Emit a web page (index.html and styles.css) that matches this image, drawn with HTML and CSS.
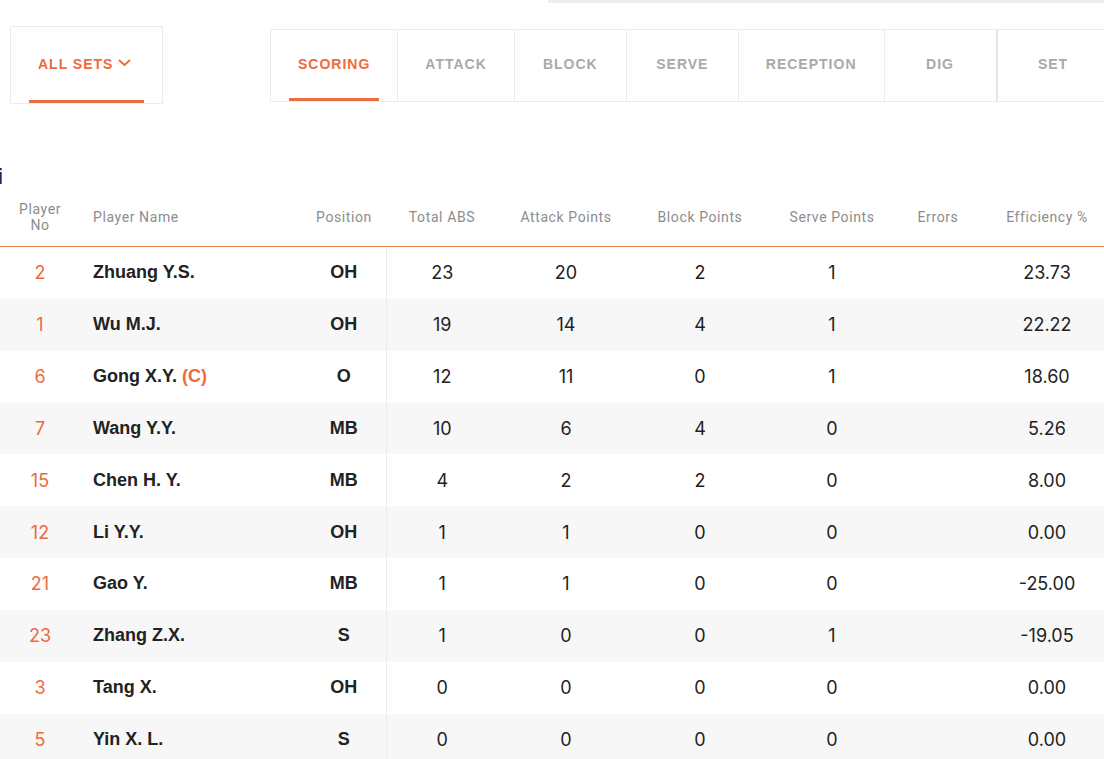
FILE: index.html
```html
<!DOCTYPE html>
<html lang="en">
<head>
<meta charset="utf-8">
<title>Scoring stats</title>
<link rel="stylesheet" href="styles.css">
</head>
<body>
<div class="page">
  <div class="topbar"></div>
  <div class="controls">
    <div class="sets">
      <div class="sets-label">ALL SETS
        <svg class="chev" width="13" height="8" viewBox="0 0 13 8"><polyline points="1.5,1.5 6.5,6 11.5,1.5" fill="none" stroke="#ee6a3c" stroke-width="1.9" stroke-linecap="round" stroke-linejoin="round"/></svg>
      </div>
      <div class="bar active"></div>
    </div>
    <div class="tabs">
      <div class="tab active"><div class="tab-label">SCORING</div><div class="bar"></div></div>
      <div class="tab"><div class="tab-label">ATTACK</div><div class="bar"></div></div>
      <div class="tab"><div class="tab-label">BLOCK</div><div class="bar"></div></div>
      <div class="tab"><div class="tab-label">SERVE</div><div class="bar"></div></div>
      <div class="tab"><div class="tab-label">RECEPTION</div><div class="bar"></div></div>
      <div class="tab"><div class="tab-label">DIG</div><div class="bar"></div></div>
      <div class="tab tab-set"><div class="tab-label">SET</div><div class="bar"></div></div>
    </div>
  </div>

  <div class="heading">i</div>

  <table class="stats">
    <colgroup>
      <col class="c-no"><col class="c-name"><col class="c-pos"><col class="c-abs"><col class="c-att"><col class="c-blk"><col class="c-srv"><col class="c-err"><col class="c-eff">
    </colgroup>
    <thead>
      <tr>
        <th>Player<br>No</th>
        <th class="left">Player Name</th>
        <th>Position</th>
        <th>Total ABS</th>
        <th>Attack Points</th>
        <th>Block Points</th>
        <th>Serve Points</th>
        <th>Errors</th>
        <th class="eff">Efficiency %</th>
      </tr>
    </thead>
    <tbody>
      <tr><td class="no">2</td><td class="name">Zhuang Y.S.</td><td class="pos">OH</td><td class="num first">23</td><td class="num">20</td><td class="num">2</td><td class="num">1</td><td class="num"></td><td class="num eff">23.73</td></tr>
      <tr><td class="no">1</td><td class="name">Wu M.J.</td><td class="pos">OH</td><td class="num first">19</td><td class="num">14</td><td class="num">4</td><td class="num">1</td><td class="num"></td><td class="num eff">22.22</td></tr>
      <tr><td class="no">6</td><td class="name">Gong X.Y. <span class="cap">(C)</span></td><td class="pos">O</td><td class="num first">12</td><td class="num">11</td><td class="num">0</td><td class="num">1</td><td class="num"></td><td class="num eff">18.60</td></tr>
      <tr><td class="no">7</td><td class="name">Wang Y.Y.</td><td class="pos">MB</td><td class="num first">10</td><td class="num">6</td><td class="num">4</td><td class="num">0</td><td class="num"></td><td class="num eff">5.26</td></tr>
      <tr><td class="no">15</td><td class="name">Chen H. Y.</td><td class="pos">MB</td><td class="num first">4</td><td class="num">2</td><td class="num">2</td><td class="num">0</td><td class="num"></td><td class="num eff">8.00</td></tr>
      <tr><td class="no">12</td><td class="name">Li Y.Y.</td><td class="pos">OH</td><td class="num first">1</td><td class="num">1</td><td class="num">0</td><td class="num">0</td><td class="num"></td><td class="num eff">0.00</td></tr>
      <tr><td class="no">21</td><td class="name">Gao Y.</td><td class="pos">MB</td><td class="num first">1</td><td class="num">1</td><td class="num">0</td><td class="num">0</td><td class="num"></td><td class="num eff">-25.00</td></tr>
      <tr><td class="no">23</td><td class="name">Zhang Z.X.</td><td class="pos">S</td><td class="num first">1</td><td class="num">0</td><td class="num">0</td><td class="num">1</td><td class="num"></td><td class="num eff">-19.05</td></tr>
      <tr><td class="no">3</td><td class="name">Tang X.</td><td class="pos">OH</td><td class="num first">0</td><td class="num">0</td><td class="num">0</td><td class="num">0</td><td class="num"></td><td class="num eff">0.00</td></tr>
      <tr><td class="no">5</td><td class="name">Yin X. L.</td><td class="pos">S</td><td class="num first">0</td><td class="num">0</td><td class="num">0</td><td class="num">0</td><td class="num"></td><td class="num eff">0.00</td></tr>
    </tbody>
  </table>
</div>
</body>
</html>
```

FILE: styles.css
```css
html, body {
  margin: 0;
  padding: 0;
  background: #ffffff;
}

body {
  font-family: "Liberation Sans", Arial, sans-serif;
  color: #222222;
}

.page {
  width: 1104px;
  overflow: hidden;
}

.topbar {
  height: 3px;
  margin-left: 548px;
  background: #eeeeee;
}

.controls {
  display: flex;
  align-items: center;
  margin-top: 23px;
  height: 78px;
}

.sets {
  box-sizing: border-box;
  flex-shrink: 0;
  width: 153px;
  height: 78px;
  margin-left: 10px;
  border: 1px solid #ececec;
  display: flex;
  flex-direction: column;
}

.sets-label {
  flex: 1;
  display: flex;
  align-items: center;
  justify-content: flex-start;
  padding: 1px 0 0 27px;
  font-size: 14px;
  font-weight: 700;
  letter-spacing: 1px;
  color: #ee6a3c;
}

.chev {
  margin-left: 5px;
  margin-top: -2px;
}

.bar {
  height: 3px;
  margin: 0 18px 0 18px;
  background: transparent;
}

.bar.active,
.tab.active .bar {
  background: #ea6c40;
}

.tabs {
  display: flex;
  margin-left: 107px;
  height: 73px;
  box-sizing: border-box;
  border: 1px solid #ececec;
  border-right: none;
  flex-shrink: 0;
}

.tab {
  display: flex;
  flex-direction: column;
  min-width: 111px;
  border-left: 1px solid #ececec;
}

.tab:first-child {
  border-left: none;
}

.tab-set {
  border-left: 2px solid #e6e6e6;
}

.tab-label {
  flex: 1;
  display: flex;
  align-items: center;
  justify-content: center;
  padding: 1px 27px 0 27px;
  font-size: 14px;
  font-weight: 700;
  letter-spacing: 1px;
  color: #a9a9a9;
  white-space: nowrap;
}

.tab.active .tab-label {
  color: #ee6a3c;
}

.heading {
  margin-top: 62px;
  margin-left: -3px;
  height: 21px;
  font-family: "Liberation Sans", Arial, sans-serif;
  font-weight: 700;
  font-size: 22px;
  line-height: 21px;
  color: #23264a;
}

.stats {
  width: 1104px;
  table-layout: fixed;
  border-collapse: collapse;
  border-spacing: 0;
}

.c-no { width: 80px; }
.c-name { width: 222px; }
.c-pos { width: 84px; }
.c-abs { width: 112px; }
.c-att { width: 136px; }
.c-blk { width: 132px; }
.c-srv { width: 132px; }
.c-err { width: 80px; }
.c-eff { width: 126px; }

.stats th {
  height: 59px;
  padding: 0;
  font-family: Roboto, "Liberation Sans", sans-serif;
  font-weight: 400;
  font-size: 14px;
  line-height: 16px;
  letter-spacing: 0.6px;
  color: #8d8d8d;
  text-align: center;
  vertical-align: middle;
  border-bottom: 1px solid #e0864f;
}

.stats th.left {
  text-align: left;
  padding-left: 13px;
}

.stats th.eff,
.stats td.eff {
  padding-left: 12px;
}

.stats td {
  height: 51.85px;
  padding: 0;
  text-align: center;
  vertical-align: middle;
}

.stats tbody tr:nth-child(even) td {
  background: #f7f7f7;
}

.stats td.no {
  font-family: Inter, "Liberation Sans", sans-serif;
  font-size: 18px;
  color: #ee6a3c;
}

.stats td.name {
  text-align: left;
  padding-left: 13px;
  font-size: 18px;
  font-weight: 700;
  color: #222222;
  white-space: nowrap;
}

.cap {
  color: #ee6a3c;
}

.stats td.pos {
  font-size: 18px;
  font-weight: 700;
  color: #222222;
}

.stats td.num {
  font-family: Inter, "Liberation Sans", sans-serif;
  font-size: 18px;
  color: #222222;
}

.stats td.first {
  border-left: 1px solid #ececec;
}
```
